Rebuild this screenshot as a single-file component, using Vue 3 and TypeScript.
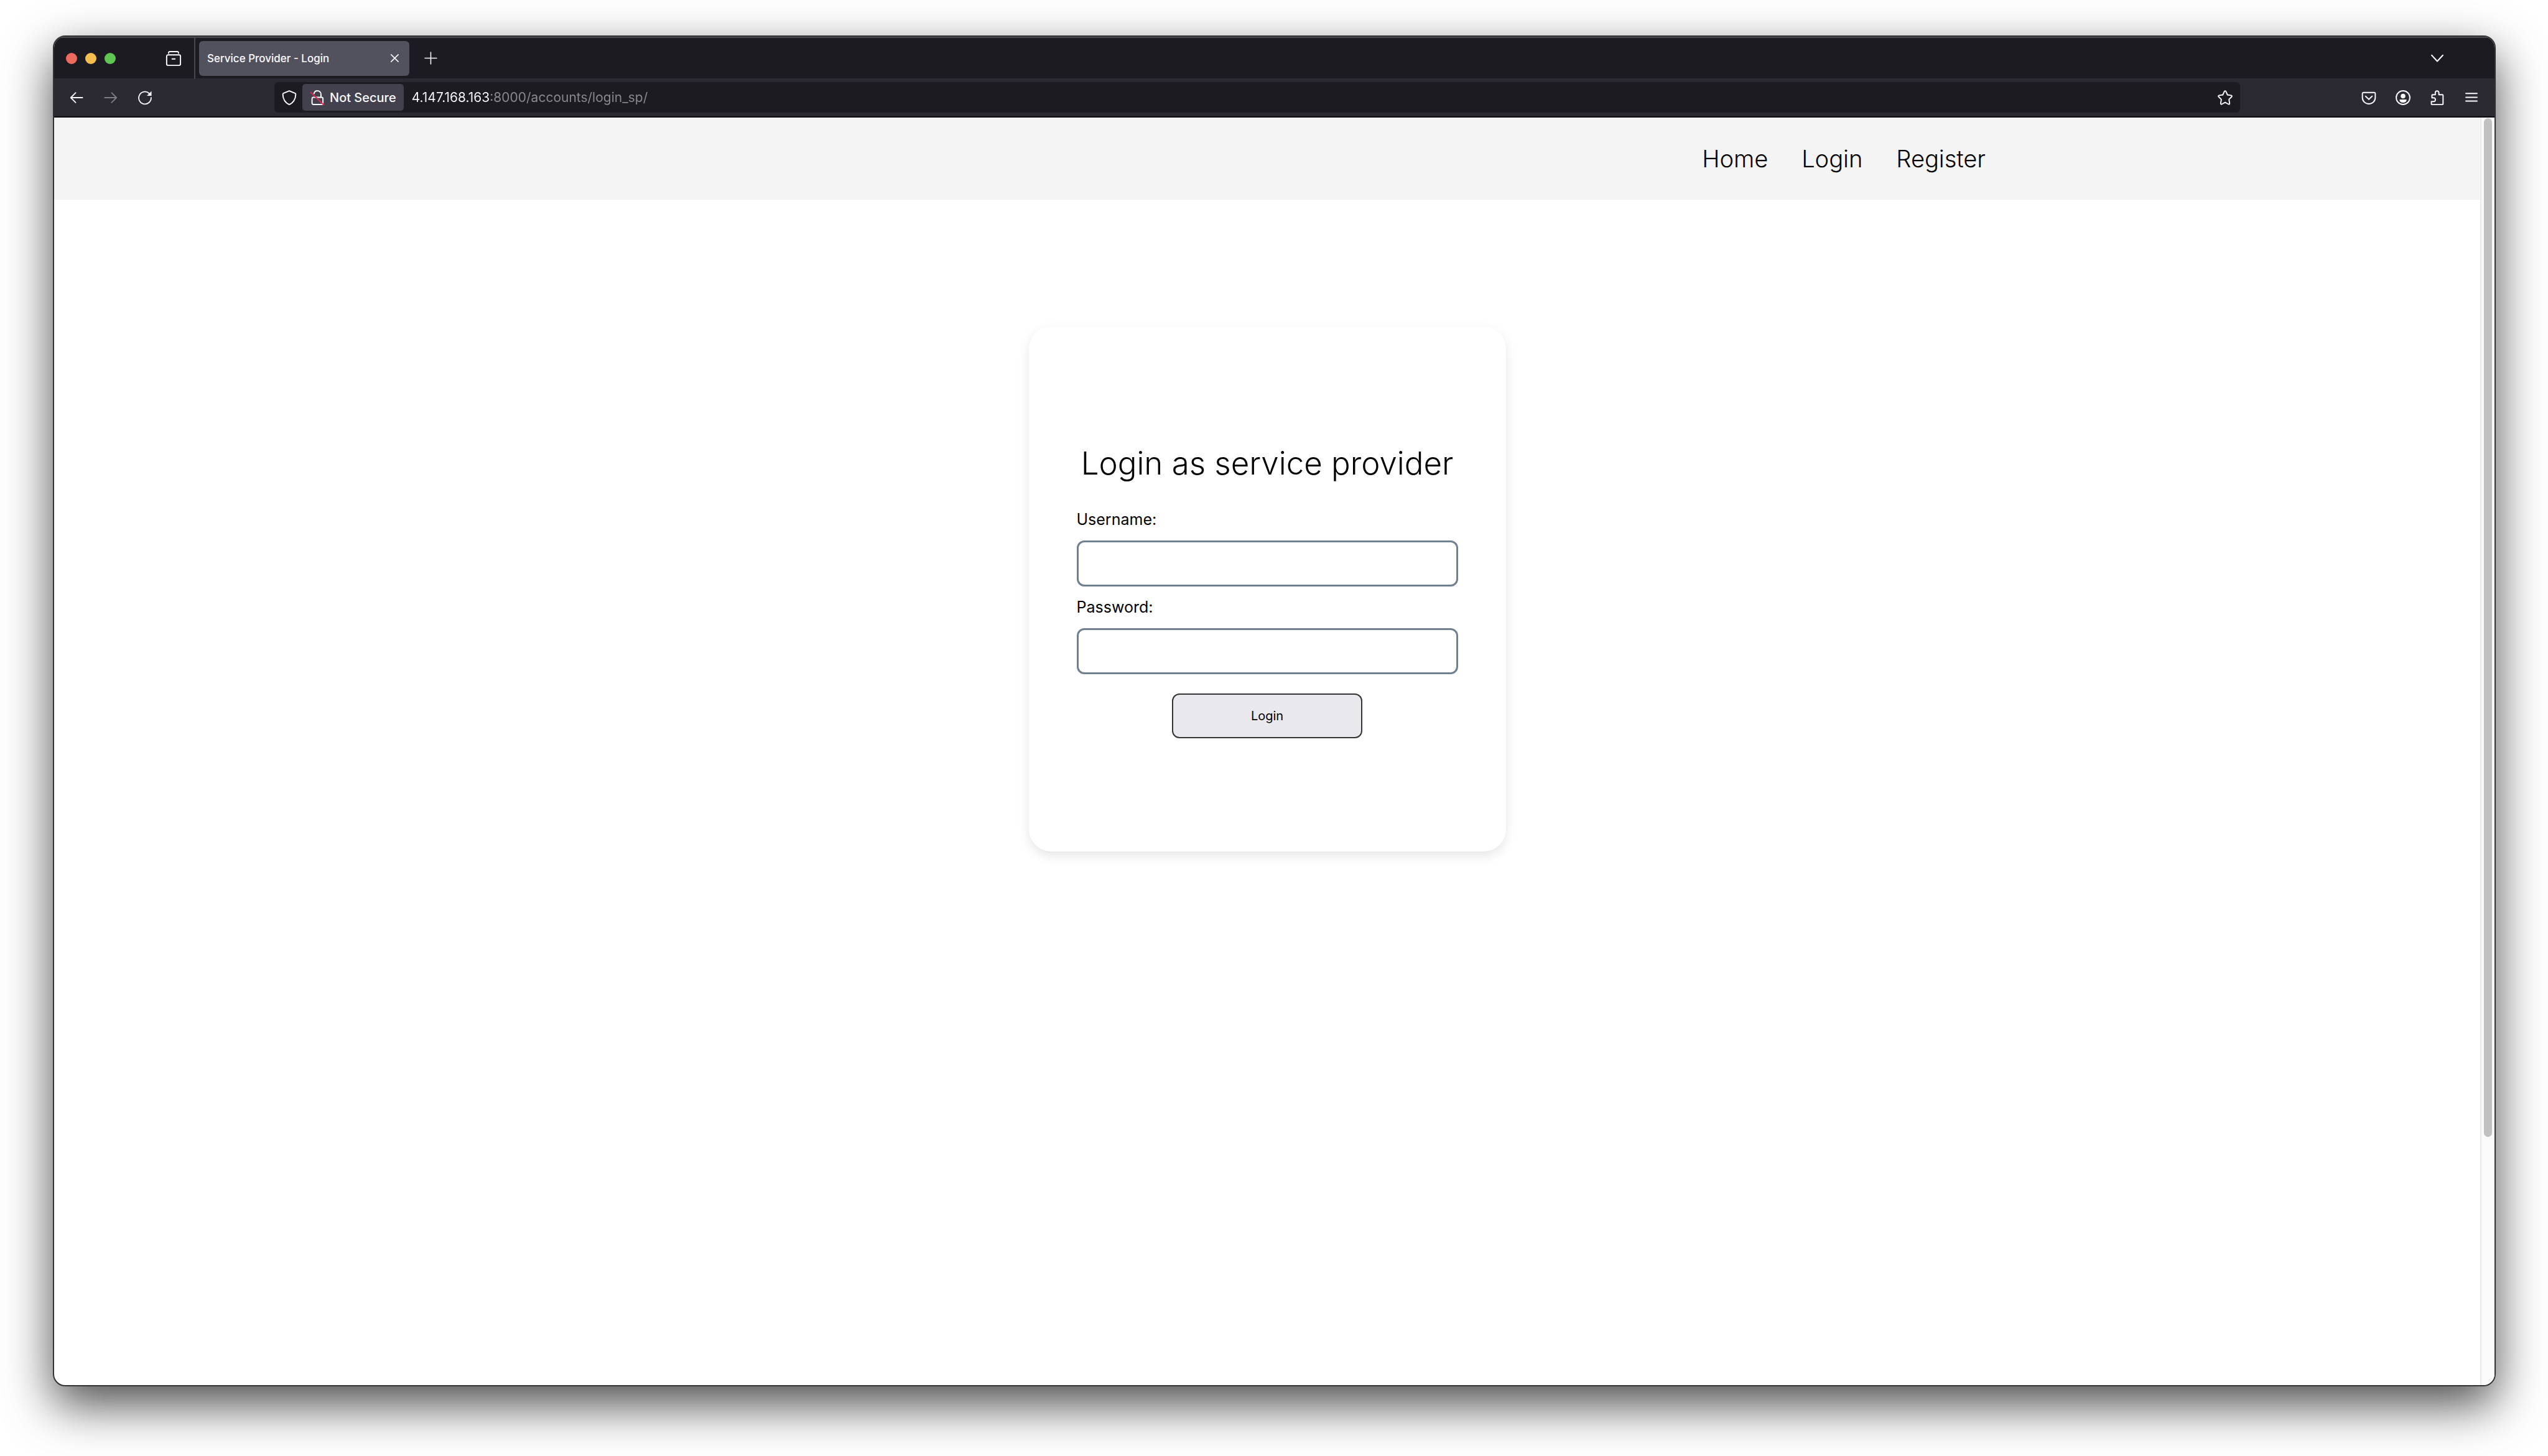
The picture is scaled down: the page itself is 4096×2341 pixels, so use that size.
<script setup lang="ts">
import { computed, ref } from 'vue'

const address = ref('4.147.168.163:8000/accounts/login_sp/')
const username = ref('')
const password = ref('')

const links = ['Home', 'Login', 'Register']

// The host is shown brighter than the rest of the address, so its drawn width is needed.
const measure = document.createElement('canvas').getContext('2d')
const hostWidth = computed(() => {
  if (!measure) return '0px'
  measure.font = '21px Inter, "Liberation Sans", sans-serif'
  return `${Math.round(measure.measureText(address.value.split(':')[0]).width)}px`
})
</script>

<template>
  <div class="desktop">
    <div class="window">
      <header class="chrome">
        <div class="tabstrip">
          <div class="lights">
            <button class="light red" type="button" aria-label="Close window"></button>
            <button class="light yellow" type="button" aria-label="Minimise window"></button>
            <button class="light green" type="button" aria-label="Zoom window"></button>
          </div>
          <button class="icon recent" type="button" aria-label="Recent browsing">
            <svg viewBox="0 0 16 16">
              <path d="M2.7 2.3C2.7 1 3.2.7 4 .7h8c.8 0 1.300.3 1.300 1.600" />
              <rect x=".6" y="4.200" width="14.800" height="11.200" rx="1.500" />
              <path d="M6.500 8.500h3" />
            </svg>
          </button>
          <div class="tab">
            <span class="tab-title">Service Provider - Login</span>
            <button class="icon close" type="button" aria-label="Close tab">
              <svg viewBox="0 0 16 16"><path d="M1 1l14 14M15 1L1 15" /></svg>
            </button>
          </div>
          <button class="icon plus" type="button" aria-label="New tab">
            <svg viewBox="0 0 16 16"><path d="M8 0v16M0 8h16" /></svg>
          </button>
          <button class="icon all-tabs" type="button" aria-label="List all tabs">
            <svg viewBox="0 0 16 16"><path d="M2 4.500l6 6.500 6-6.500" /></svg>
          </button>
        </div>

        <div class="toolbar">
          <div class="history">
            <button class="icon" type="button" aria-label="Back">
              <svg viewBox="0 0 16 16"><path d="M15 8H1.500M7 2.300L1.300 8 7 13.700" /></svg>
            </button>
            <button class="icon" type="button" aria-label="Forward" disabled>
              <svg viewBox="0 0 16 16"><path d="M1 8h13.500M9 2.300L14.700 8 9 13.700" /></svg>
            </button>
            <button class="icon" type="button" aria-label="Reload">
              <svg viewBox="0 0 16 16">
                <path d="M12.800 2.900A7.200 7.200 0 1 0 15.200 8" />
                <path class="solid" d="M15.700.4v5.500h-5.500z" />
              </svg>
            </button>
          </div>
          <div class="urlbar">
            <button class="icon shield" type="button" aria-label="Tracking protection">
              <svg viewBox="0 0 16 16">
                <path d="M8 .7l6.100 2.500c.5.2.8.6.8 1.100 0 5.200-2.700 9.500-6.900 11.100C3.800 13.800 1.100 9.500 1.100 4.300c0-.5.3-.9.8-1.100z" />
              </svg>
            </button>
            <button class="security" type="button">
              <svg viewBox="0 0 16 16">
                <path d="M4.500 3.600C5 1.500 6.500.7 8.200.7c2.200 0 3.800 1.600 3.800 3.900v3.100" />
                <path d="M3.500 7.700h9.200c.9 0 1.400.5 1.400 1.400v4.700c0 .9-.5 1.500-1.400 1.500H3.900c-.9 0-1.500-.6-1.500-1.500V9.100c0-.7.3-1.200 1.100-1.400z" />
                <path class="strike" d="M1.200 2.500L14.800 15.500" />
              </svg>
              <span>Not Secure</span>
            </button>
            <input
              v-model="address"
              class="address"
              type="text"
              aria-label="Address"
              spellcheck="false"
              :style="{ '--host': hostWidth }"
            />
            <button class="icon star" type="button" aria-label="Bookmark this page">
              <svg viewBox="0 0 16 16">
                <path d="M8 .8c.3 0 .6.200.8.500l1.700 3.700 4 .6c.7.1 1 .9.500 1.400l-2.900 2.900.7 4.200c.1.700-.6 1.200-1.200.900L8 13.100 4.400 15c-.6.300-1.300-.2-1.200-.9l.7-4.200L1 7C.5 6.500.8 5.700 1.500 5.600l4-.6 1.700-3.700c.2-.3.5-.5.800-.5z" />
              </svg>
            </button>
          </div>
          <div class="actions">
            <button class="icon" type="button" aria-label="Save to Pocket">
              <svg viewBox="0 0 16 16">
                <path d="M2.300 2.500h11.400c.7 0 1.200.5 1.200 1.200V8c0 3.800-3.100 6.600-6.900 6.600S1.100 11.800 1.100 8V3.700c0-.7.5-1.200 1.200-1.200z" />
                <path d="M4.500 6.500L8 9.800l3.500-3.300" />
              </svg>
            </button>
            <button class="icon" type="button" aria-label="Account">
              <svg viewBox="0 0 16 16">
                <circle cx="8" cy="8" r="7.300" />
                <circle class="solid" cx="8" cy="6.300" r="2.500" />
                <path class="solid" d="M4.300 10h7.400v.8a3.700 2.600 0 0 1-7.400 0z" />
              </svg>
            </button>
            <button class="icon" type="button" aria-label="Extensions">
              <svg viewBox="0 0 16 16">
                <path d="M2.200 15.400h11.300c.4 0 .7-.3.700-.7V5.500c0-.4-.3-.7-.7-.7H9.700V2.700a1.900 1.900 0 0 0-3.800 0v2.100H3c-.4 0-.7.3-.7.700v2.700h1.700a2 2 0 0 1 0 4H1.700v2.700c0 .3.200.5.500.5z" />
              </svg>
            </button>
            <button class="icon" type="button" aria-label="Menu">
              <svg viewBox="0 0 16 16"><path d="M2 3.500h12M2 7.600h12M2 11.700h12" /></svg>
            </button>
          </div>
        </div>
      </header>

      <div class="viewport">
        <div class="page">
          <nav class="site-nav">
            <a v-for="link in links" :key="link" href="#">{{ link }}</a>
          </nav>
          <main>
            <form class="card" @submit.prevent>
              <h1>Login as service provider</h1>
              <label for="username">Username:</label>
              <input id="username" v-model="username" type="text" />
              <label for="password">Password:</label>
              <input id="password" v-model="password" type="password" />
              <button type="submit">Login</button>
            </form>
          </main>
        </div>
        <div class="scrollbar"><div class="thumb"></div></div>
      </div>
    </div>
  </div>
</template>

<style>
body {
  background: #fff;
}
</style>

<style scoped>
* {
  box-sizing: border-box;
}

button,
input {
  font: inherit;
  margin: 0;
  padding: 0;
  border: 0;
  background: none;
}

.desktop {
  display: flex;
  min-height: 100vh;
  padding: 57px 84px 112px 85px;
  font-family: Inter, "Liberation Sans", sans-serif;
  overflow: hidden;
}

.window {
  flex: 1;
  display: flex;
  flex-direction: column;
  min-width: 0;
  border: 2px solid #333;
  border-radius: 20px;
  overflow: hidden;
  background: #fff;
  box-shadow: 0 30px 78px rgba(0, 0, 0, 0.7);
}

.chrome {
  color: #fbfbfe;
  border-bottom: 2px solid #0c0c0d;
}

.tabstrip {
  display: flex;
  align-items: center;
  height: 67px;
  border-top: 2px solid #4a4a4c;
  background: #1c1b22;
}

.lights {
  display: flex;
  gap: 13px;
  margin-left: 19px;
}

.light {
  width: 18px;
  height: 18px;
  border-radius: 50%;
}

.red {
  background: #ed6a5e;
}

.yellow {
  background: #f4bf4f;
}

.green {
  background: #61c554;
}

.icon {
  display: flex;
  align-items: center;
  justify-content: center;
  flex: none;
  width: 24px;
  height: 24px;
  color: inherit;
}

.icon:disabled {
  opacity: 0.4;
}

svg {
  width: 100%;
  height: 100%;
  fill: none;
  stroke: currentColor;
  stroke-width: 1.3;
  stroke-linecap: round;
  stroke-linejoin: round;
  overflow: visible;
}

.solid {
  fill: currentColor;
  stroke: none;
}

.recent {
  margin-left: 81px;
}

.tab {
  display: flex;
  align-items: center;
  justify-content: space-between;
  width: 338px;
  height: 56px;
  margin-left: 29px;
  padding: 0 17px 0 13px;
  border-radius: 6px;
  background: #52525e;
  position: relative;
}

.tab::before {
  content: "";
  position: absolute;
  left: -8px;
  top: -5px;
  bottom: -5px;
  width: 2px;
  background: #46464c;
}

.tab-title {
  font-size: 17px;
  font-weight: 500;
}

.close {
  width: 13px;
  height: 13px;
}

.close svg {
  stroke-width: 2;
}

.plus {
  width: 19px;
  height: 19px;
  margin-left: 25px;
}

.all-tabs {
  margin-left: auto;
  margin-right: 80px;
}

.toolbar {
  display: flex;
  align-items: center;
  height: 61px;
  padding-right: 25px;
  background: #2b2a33;
}

.history {
  display: flex;
  gap: 33px;
  margin-left: 25px;
}

.history .icon {
  width: 22px;
  height: 22px;
}

.urlbar {
  flex: 1;
  display: flex;
  align-items: center;
  height: 49px;
  margin-left: 197px;
  margin-right: 195px;
  padding: 0 12px;
  border-radius: 6px;
  background: #1c1b22;
}

.security {
  display: flex;
  align-items: center;
  gap: 8px;
  height: 43px;
  margin-left: 9px;
  padding: 0 12px;
  border-radius: 5px;
  background: #42414d;
  color: inherit;
  font-size: 20px;
  font-weight: 500;
  white-space: nowrap;
}

.security svg {
  width: 24px;
  height: 24px;
}

.security .strike {
  stroke: #e22850;
}

.address {
  flex: 1;
  min-width: 0;
  height: 100%;
  margin-left: 13px;
  color: #fbfbfe;
  font-size: 21px;
  background: linear-gradient(to right, #fbfbfe var(--host), #8b8a90 var(--host));
  background-clip: text;
  -webkit-text-fill-color: transparent;
}

.actions {
  display: flex;
  gap: 31px;
}

.viewport {
  flex: 1;
  display: flex;
}

.page {
  flex: 1;
}

.site-nav {
  display: flex;
  justify-content: flex-end;
  align-items: center;
  gap: 54px;
  height: 132px;
  padding-right: 795px;
  background: #f4f4f4;
  font-size: 38px;
  font-weight: 300;
}

.site-nav a {
  color: #000;
  text-decoration: none;
}

.card {
  display: flex;
  flex-direction: column;
  width: 767px;
  margin: 204px auto 0;
  padding: 184px 77px 182px;
  border-radius: 36px;
  box-shadow: 0 7px 18px rgba(0, 0, 0, 0.1);
  color: #000;
}

.card h1 {
  margin: 0 0 35px;
  font-size: 51px;
  line-height: 72px;
  font-weight: 300;
  text-align: center;
  white-space: nowrap;
}

.card label {
  font-size: 25px;
  line-height: 38px;
  padding-bottom: 15px;
}

.card input {
  height: 74px;
  margin-bottom: 14px;
  padding: 0 16px;
  border: 3px solid #708090;
  border-radius: 12px;
  font-size: 25px;
}

.card button {
  align-self: center;
  width: 50%;
  height: 72px;
  margin-top: 17px;
  border: 2px solid #333;
  border-radius: 12px;
  background: #e9e9ed;
  color: #000;
  font-size: 20px;
}

.scrollbar {
  width: 23px;
  padding: 1px 4px 0;
  border-left: 2px solid #ebebeb;
  background: #fafafa;
}

.thumb {
  height: 80.4%;
  border-radius: 7px;
  background: #c1c1c1;
}
</style>
